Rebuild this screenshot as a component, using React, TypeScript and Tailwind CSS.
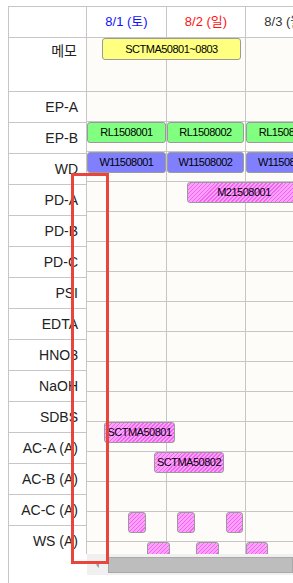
import React from "react"

const labels = [
  "EP-A", "EP-B", "WD", "PD-A", "PD-B", "PD-C", "PSI", "EDTA",
  "HNO3", "NaOH", "SDBS", "AC-A (A)", "AC-B (A)", "AC-C (A)", "WS (A)",
]

const days = [
  { text: "8/1 (토)", color: "text-[#1010ff]", w: "w-[80px]" },
  { text: "8/2 (일)", color: "text-[#ff1010]", w: "w-[79px]" },
  { text: "8/3 (월)", color: "text-[#333333]", w: "w-[80px]" },
  { text: "8/4 (화)", color: "text-[#333333]", w: "w-[79px]" },
]

type Bar = {
  left: number
  top: number
  width: number
  text?: string
  kind: "memo" | "green" | "blue" | "hatch"
}

// gantt bars, offsets from the top-left of the schedule area
const bars: Bar[] = [
  { left: 15, top: 31, width: 139, text: "SCTMA50801~0803", kind: "memo" },
  { left: 0, top: 115, width: 79, text: "RL1508001", kind: "green" },
  { left: 80, top: 115, width: 77, text: "RL1508002", kind: "green" },
  { left: 159, top: 115, width: 78, text: "RL1508003", kind: "green" },
  { left: 0, top: 145, width: 79, text: "W11508001", kind: "blue" },
  { left: 80, top: 145, width: 77, text: "W11508002", kind: "blue" },
  { left: 159, top: 145, width: 78, text: "W11508003", kind: "blue" },
  { left: 100, top: 175, width: 114, text: "M21508001", kind: "hatch" },
  { left: 17, top: 415, width: 71, text: "SCTMA50801", kind: "hatch" },
  { left: 67, top: 445, width: 70, text: "SCTMA50802", kind: "hatch" },
  { left: 41, top: 505, width: 18, kind: "hatch" },
  { left: 90, top: 505, width: 18, kind: "hatch" },
  { left: 139, top: 505, width: 17, kind: "hatch" },
  { left: 60, top: 535, width: 23, kind: "hatch" },
  { left: 109, top: 535, width: 23, kind: "hatch" },
  { left: 159, top: 535, width: 22, kind: "hatch" },
]

const barStyle: Record<Bar["kind"], string> = {
  memo: "bg-[#ffff80] h-[22px]",
  green: "bg-[#80ff80] h-[21px]",
  blue: "bg-[#8080ff] h-[21px]",
  hatch:
    "h-[21px] bg-[repeating-linear-gradient(135deg,#ffa0ff_0px,#ffa0ff_1.6px,#ee66ee_1.6px,#ee66ee_2.8px)]",
}

function BarChip({ bar }: { bar: Bar }) {
  return (
    <div
      className={`absolute flex items-center justify-center overflow-hidden rounded-[3px] border border-[#9a9a9a] text-[11px] tracking-[-0.5px] text-black ${barStyle[bar.kind]}`}
      style={{ left: bar.left, top: bar.top, width: bar.width }}
    >
      {bar.text && <span className="whitespace-nowrap leading-none">{bar.text}</span>}
    </div>
  )
}

export default function App() {
  return (
    <div className="relative h-[583px] w-[293px] overflow-hidden bg-white pl-[8px] pt-[6px] font-['Liberation_Sans','Noto_Sans_CJK_KR',sans-serif]">
      <div className="flex h-[577px] flex-col border-l border-t border-[#c6c6c6]">
        <div className="flex h-[547px] overflow-hidden">
          {/* row labels */}
          <div className="w-[78px] shrink-0 border-r border-[#c6c6c6] bg-white text-[14px] text-[#222]">
            <div className="h-[31px] border-b border-[#c6c6c6]" />
            <div className="h-[54px] border-b border-[#c6c6c6] pr-[9px] pt-[1px] text-right leading-[24px]">메모</div>
            {labels.map((l) => (
              <div
                key={l}
                className="flex h-[31px] items-center justify-end whitespace-nowrap border-b border-[#c6c6c6] pr-[8px]"
              >
                {l}
              </div>
            ))}
          </div>

          {/* schedule */}
          <div className="relative flex-1 overflow-hidden">
            <div className="flex h-[31px] border-b border-[#c6c6c6] bg-white">
              {days.map((d) => (
                <div
                  key={d.text}
                  className={`flex shrink-0 items-center justify-center whitespace-nowrap border-r border-[#c6c6c6] text-[13px] ${d.w} ${d.color}`}
                >
                  {d.text}
                </div>
              ))}
            </div>
            <div className="bg-[#fdfcf8]">
              <div className="flex h-[54px] border-b border-[#c6c6c6]">
                {days.map((d) => (
                  <div key={d.text} className={`shrink-0 border-r border-[#c6c6c6] ${d.w}`} />
                ))}
              </div>
              {Array.from({ length: 16 }).map((_, i) => (
                <div key={i} className="flex h-[30px] border-b border-[#c6c6c6]">
                  {days.map((d) => (
                    <div key={d.text} className={`shrink-0 border-r border-[#c6c6c6] ${d.w}`} />
                  ))}
                </div>
              ))}
            </div>
            {bars.map((b, i) => (
              <BarChip key={i} bar={b} />
            ))}
          </div>
        </div>

        {/* horizontal scrollbar */}
        <div className="flex h-[21px]">
          <div className="w-[78px] shrink-0" />
          <div className="flex flex-1 items-start bg-[#f0f0f0] pt-[3px]">
            <div className="flex h-[16px] w-[21px] shrink-0 items-center justify-center">
              <div className="h-0 w-0 border-y-[3px] border-r-[3px] border-y-transparent border-r-[#a0a0a0]" />
            </div>
            <div className="h-[16px] flex-1 border border-[#a8a8a8] bg-[#bdbdbd]" />
          </div>
        </div>
      </div>

      {/* annotation frame */}
      <div className="absolute left-[71px] top-[173px] h-[391px] w-[38px] border-[3px] border-[#e8453c]" />
    </div>
  )
}
